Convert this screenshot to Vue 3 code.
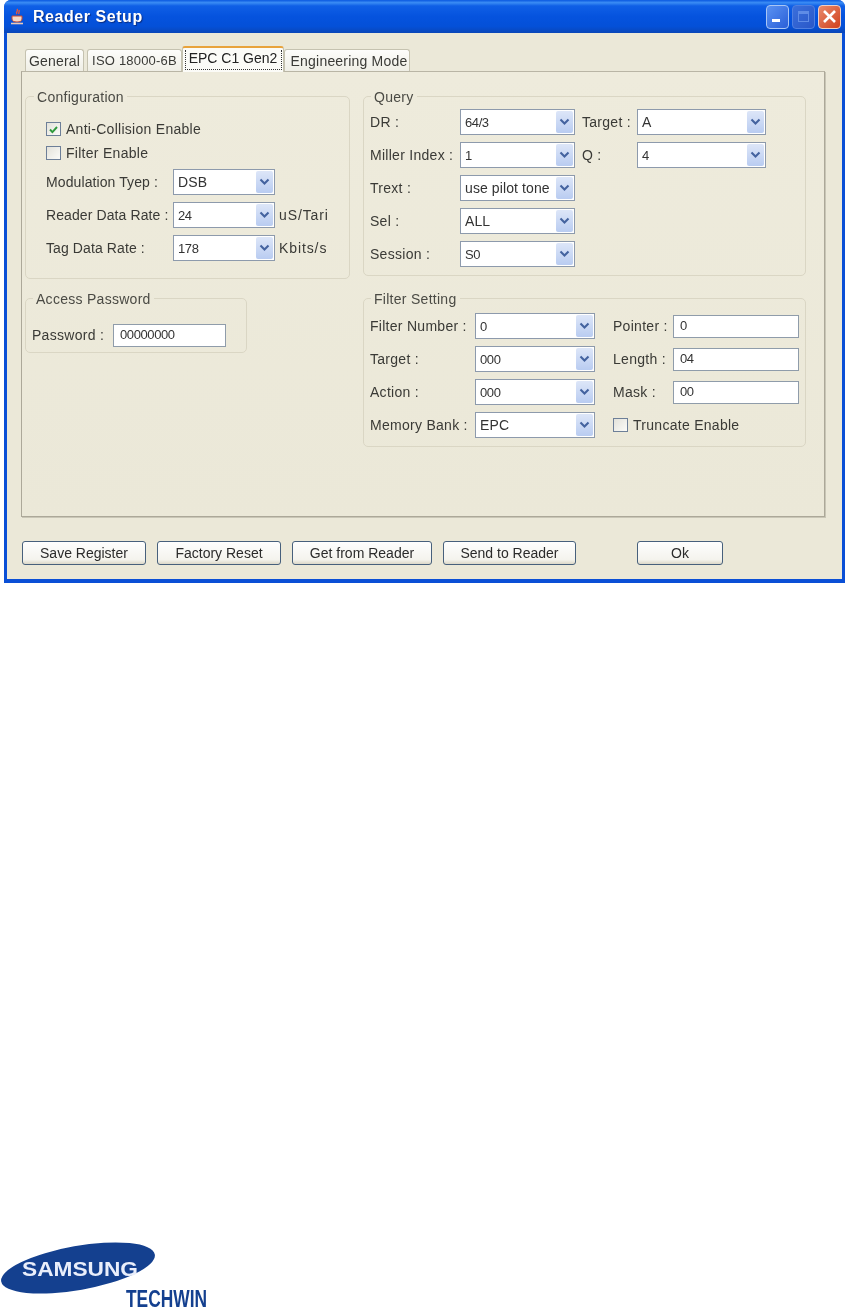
<script setup>
const configRows = [
  { label: 'Modulation Tyep :', value: 'DSB', unit: '' },
  { label: 'Reader Data Rate :', value: '24', unit: 'uS/Tari' },
  { label: 'Tag Data Rate :', value: '178', unit: 'Kbits/s' }
]
const queryRows = [
  { label: 'DR :', value: '64/3', label2: 'Target :', value2: 'A' },
  { label: 'Miller Index :', value: '1', label2: 'Q :', value2: '4' },
  { label: 'Trext :', value: 'use pilot tone' },
  { label: 'Sel :', value: 'ALL' },
  { label: 'Session :', value: 'S0' }
]
const filterRows = [
  { label: 'Filter Number :', value: '0', label2: 'Pointer :', input: '0' },
  { label: 'Target :', value: '000', label2: 'Length :', input: '04' },
  { label: 'Action :', value: '000', label2: 'Mask :', input: '00' }
]
const actions = [
  { text: 'Save Register', cls: 'b1' },
  { text: 'Factory Reset', cls: 'b1' },
  { text: 'Get from Reader', cls: 'b2' },
  { text: 'Send to Reader', cls: 'b3' }
]
const isNum = (v) => /^[\dS/]+$/.test(v)
</script>

<template>
  <div class="page">
    <div class="window">
      <header class="titlebar">
        <svg class="appicon" width="16" height="18" viewBox="0 0 16 18">
          <path d="M8 1c2 2-2 3 0 5M10 2c1 2-1 2 0 4" fill="none" stroke="#e8563a" stroke-width="1.4" />
          <path d="M3 8h10v3c0 2-2 3-5 3s-5-1-5-3z" fill="#f3d9c8" stroke="#c9482e" stroke-width="1" />
          <path d="M2 15.5h12" stroke="#e9c8b8" stroke-width="1.6" />
        </svg>
        <span class="title">Reader Setup</span>
        <div class="winbtns">
          <span class="wb min"><i></i></span>
          <span class="wb max"><i></i></span>
          <span class="wb close">
            <svg width="15" height="15" viewBox="0 0 15 15"><path d="M2 2l11 11M13 2L2 13" stroke="#fff" stroke-width="2.6" /></svg>
          </span>
        </div>
      </header>

      <div class="client">
        <div class="tabs">
          <div class="tab t1">General</div>
          <div class="tab t2">ISO 18000-6B</div>
          <div class="tab active"><span>EPC C1 Gen2</span></div>
          <div class="tab t4">Engineering Mode</div>
        </div>

        <div class="panel">
          <div class="col left">
            <fieldset class="group config">
              <legend>Configuration</legend>
              <div class="check-row">
                <span class="cb">
                  <svg width="11" height="11" viewBox="0 0 11 11"><path d="M2 5.5l2.4 2.6L9 3" fill="none" stroke="#2f9a3c" stroke-width="1.9" /></svg>
                </span>
                <span>Anti-Collision Enable</span>
              </div>
              <div class="check-row">
                <span class="cb"></span>
                <span>Filter Enable</span>
              </div>
              <div class="rows config-rows">
                <div v-for="r in configRows" :key="r.label" class="row">
                  <span class="lbl w127 tight">{{ r.label }}</span>
                  <div class="combo w102">
                    <span class="val" :class="{ num: isNum(r.value) }">{{ r.value }}</span>
                    <span class="arrow"><svg width="11" height="8" viewBox="0 0 11 8"><path d="M1.5 1.5l4 4 4-4" fill="none" stroke="#44639f" stroke-width="2.1" /></svg></span>
                  </div>
                  <span class="unit">{{ r.unit }}</span>
                </div>
              </div>
            </fieldset>

            <fieldset class="group access">
              <legend>Access Password</legend>
              <div class="row">
                <span class="lbl w80">Password :</span>
                <div class="field w113">00000000</div>
              </div>
            </fieldset>
          </div>

          <div class="col right">
            <fieldset class="group query">
              <legend>Query</legend>
              <div class="rows">
                <div v-for="r in queryRows" :key="r.label" class="row">
                  <span class="lbl w90">{{ r.label }}</span>
                  <div class="combo w115">
                    <span class="val" :class="{ num: isNum(r.value) }">{{ r.value }}</span>
                    <span class="arrow"><svg width="11" height="8" viewBox="0 0 11 8"><path d="M1.5 1.5l4 4 4-4" fill="none" stroke="#44639f" stroke-width="2.1" /></svg></span>
                  </div>
                  <template v-if="r.label2">
                    <span class="lbl w55 second">{{ r.label2 }}</span>
                    <div class="combo w129">
                      <span class="val" :class="{ num: isNum(r.value2) }">{{ r.value2 }}</span>
                      <span class="arrow"><svg width="11" height="8" viewBox="0 0 11 8"><path d="M1.5 1.5l4 4 4-4" fill="none" stroke="#44639f" stroke-width="2.1" /></svg></span>
                    </div>
                  </template>
                </div>
              </div>
            </fieldset>

            <fieldset class="group filter">
              <legend>Filter Setting</legend>
              <div class="rows">
                <div v-for="r in filterRows" :key="r.label" class="row">
                  <span class="lbl w105">{{ r.label }}</span>
                  <div class="combo w120">
                    <span class="val" :class="{ num: isNum(r.value) }">{{ r.value }}</span>
                    <span class="arrow"><svg width="11" height="8" viewBox="0 0 11 8"><path d="M1.5 1.5l4 4 4-4" fill="none" stroke="#44639f" stroke-width="2.1" /></svg></span>
                  </div>
                  <span class="lbl w60 third">{{ r.label2 }}</span>
                  <div class="field w126">{{ r.input }}</div>
                </div>
                <div class="row">
                  <span class="lbl w105">Memory Bank :</span>
                  <div class="combo w120">
                    <span class="val">EPC</span>
                    <span class="arrow"><svg width="11" height="8" viewBox="0 0 11 8"><path d="M1.5 1.5l4 4 4-4" fill="none" stroke="#44639f" stroke-width="2.1" /></svg></span>
                  </div>
                  <span class="cb third"></span>
                  <span class="trunc">Truncate Enable</span>
                </div>
              </div>
            </fieldset>
          </div>
        </div>

        <div class="actions">
          <button v-for="a in actions" :key="a.text" class="btn" :class="a.cls">{{ a.text }}</button>
          <button class="btn ok">Ok</button>
        </div>
      </div>
    </div>

    <svg class="logo" width="250" height="77" viewBox="0 0 250 77">
      <ellipse cx="78" cy="30" rx="78" ry="22" transform="rotate(-10 78 30)" fill="#14408f" />
      <text x="22" y="38" class="sam" textLength="116" lengthAdjust="spacingAndGlyphs">SAMSUNG</text>
      <text x="126" y="69" class="tech" textLength="81" lengthAdjust="spacingAndGlyphs">TECHWIN</text>
    </svg>
  </div>
</template>

<style scoped>
.page {
  width: 847px;
  height: 1315px;
  overflow: hidden;
  background: #fff;
  font-family: "Liberation Sans", Arial, sans-serif;
  font-size: 14px;
  letter-spacing: 0.28px;
  color: #3a3a36;
}
.window {
  margin: 0 2px 0 4px;
  width: 841px;
  height: 583px;
  box-sizing: border-box;
  border-radius: 7px 7px 0 0;
  background: #0a4fd6;
  padding: 0 3px 4px 3px;
  display: flex;
  flex-direction: column;
  filter: blur(0.35px);
}
.titlebar {
  margin: 0 -3px;
  height: 33px;
  flex: none;
  box-sizing: border-box;
  padding: 0 4px 0 5px;
  display: flex;
  align-items: center;
  border-radius: 7px 7px 0 0;
  background: linear-gradient(180deg, #0a58e0 0%, #3a8cf4 8%, #0f5fe6 18%, #0553de 50%, #0450d8 80%, #0a46b8 100%);
}
.appicon { margin-right: 8px; flex: none; }
.title {
  color: #fff;
  font-size: 16px;
  font-weight: 700;
  letter-spacing: 0.55px;
  text-shadow: 1px 1px 1px #0a2c80;
}
.winbtns { margin-left: auto; display: flex; gap: 3px; }
.wb {
  width: 23px;
  height: 24px;
  box-sizing: border-box;
  border: 1px solid #dce6fa;
  border-radius: 4px;
  display: flex;
  align-items: center;
  justify-content: center;
}
.min { background: linear-gradient(135deg, #5a92f2, #2a5fd8); border-color: #a9c6f5; align-items: flex-end; justify-content: flex-start; padding: 0 0 6px 5px; }
.min i { display: block; width: 8px; height: 3px; background: #fff; }
.max { background: linear-gradient(135deg, #3a6fdc, #2a58c8); border-color: #4f7fe0; }
.max i { display: block; width: 11px; height: 11px; border: 1px solid #5f8ce6; border-top-width: 3px; box-sizing: border-box; }
.close { background: linear-gradient(135deg, #e98a6c, #d0401c); border-color: #f0d0c4; }
.client {
  flex: 1;
  background: #ebe8d8;
  padding: 13px 17px 15px 14px;
  display: flex;
  flex-direction: column;
}
.tabs { display: flex; height: 25px; padding-left: 4px; flex: none; align-items: flex-end; }
.tab {
  height: 22px;
  box-sizing: border-box;
  border: 1px solid #c5c2b0;
  border-bottom: 0;
  border-radius: 3px 3px 0 0;
  background: linear-gradient(180deg, #fdfdfb, #efeee5);
  display: flex;
  align-items: center;
  justify-content: center;
  white-space: nowrap;
  letter-spacing: 0.2px;
}
.t1 { width: 59px; margin-right: 3px; }
.t2 { width: 95px; font-size: 13px; }
.t4 { width: 126px; padding-left: 4px; }
.tab.active {
  width: 102px;
  height: 26px;
  margin-bottom: -1px;
  position: relative;
  z-index: 1;
  background: #fbfbf7;
  border-top: 2px solid #e8a33c;
  color: #222;
  align-items: flex-start;
  letter-spacing: 0;
}
.tab.active span {
  display: block;
  width: 97px;
  height: 20px;
  margin-top: 2px;
  line-height: 17px;
  text-align: center;
  border: 1px dotted #333;
  border-top: 0;
  box-sizing: border-box;
}
.panel {
  width: 804px;
  height: 446px;
  box-sizing: border-box;
  flex: none;
  border: 1px solid #aca899;
  border-top-color: #b9b5a5;
  background: linear-gradient(180deg, #eeebdc 0%, #ebe8d8 100%);
  box-shadow: 1px 1px 0 #c9c6b6;
  padding: 17px 0 0 3px;
  display: flex;
  gap: 13px;
}
.col { display: flex; flex-direction: column; }
.left { width: 325px; gap: 12px; align-items: flex-start; }
.right { width: 443px; gap: 15px; }
.group {
  margin: 0;
  box-sizing: border-box;
  min-width: 0;
  border: 1px solid #dad6c4;
  border-radius: 5px;
}
.group legend {
  padding: 0 3px;
  line-height: 16px;
  height: 14px;
  color: #4a4a44;
}
.config legend { margin-left: -12px; }
.access legend { margin-left: 1px; }
.query legend, .filter legend { margin-left: 1px; }
.config { width: 325px; height: 190px; padding: 14px 0 0 20px; }
.access { width: 222px; height: 62px; padding: 17px 0 0 6px; }
.query { width: 443px; height: 187px; padding: 6px 0 0 6px; }
.filter { width: 443px; height: 156px; padding: 8px 0 0 6px; }
.check-row { height: 24px; display: flex; align-items: center; gap: 5px; }
.cb {
  width: 15px;
  height: 14px;
  flex: none;
  box-sizing: border-box;
  border: 1px solid #6d7f98;
  background: linear-gradient(135deg, #e3e2da, #fbfbf8);
  display: inline-flex;
  align-items: center;
  justify-content: center;
}
.rows { display: flex; flex-direction: column; gap: 7px; }
.config-rows { margin-top: 4px; }
.row { height: 26px; display: flex; align-items: center; }
.lbl { flex: none; white-space: nowrap; }
.tight { letter-spacing: 0.1px; }
.w127 { width: 127px; }
.w80 { width: 81px; }
.w90 { width: 90px; }
.w105 { width: 105px; }
.w55 { width: 55px; }
.w60 { width: 60px; }
.second { margin-left: 7px; }
.third { margin-left: 18px; }
.combo {
  height: 26px;
  flex: none;
  box-sizing: border-box;
  border: 1px solid #8d9aac;
  background: #fff;
  display: flex;
  align-items: center;
  padding: 1px;
  color: #333;
}
.w102 { width: 102px; }
.w115 { width: 115px; }
.w129 { width: 129px; }
.w120 { width: 120px; }
.val { flex: 1; padding-left: 3px; white-space: nowrap; overflow: hidden; letter-spacing: 0.1px; }
.num { font-size: 13px; letter-spacing: -0.4px; }
.arrow {
  width: 17px;
  height: 100%;
  flex: none;
  border-radius: 2px;
  background: linear-gradient(180deg, #dde6f8, #b9ccf1);
  display: flex;
  align-items: center;
  justify-content: center;
}
.unit { margin-left: 4px; white-space: nowrap; letter-spacing: 0.9px; }
.field {
  height: 23px;
  box-sizing: border-box;
  border: 1px solid #8f9caa;
  background: #fff;
  padding-left: 6px;
  line-height: 20px;
  flex: none;
  color: #333;
  font-size: 13px;
  letter-spacing: -0.4px;
}
.w113 { width: 113px; }
.w126 { width: 126px; }
.trunc { margin-left: 5px; white-space: nowrap; }
.actions { display: flex; margin-top: 24px; height: 23px; padding-left: 1px; flex: none; }
.btn {
  height: 24px;
  box-sizing: border-box;
  border: 1px solid #47607c;
  border-radius: 3px;
  background: linear-gradient(180deg, #fefefe 0%, #f4f3ed 80%, #dcd8c8 100%);
  font-family: inherit;
  font-size: 14px;
  letter-spacing: 0;
  color: #2b2b2b;
  padding: 0;
}
.b1 { width: 124px; margin-right: 11px; }
.b2 { width: 140px; margin-right: 11px; }
.b3 { width: 133px; }
.ok { width: 86px; margin-left: 61px; }
.logo { display: block; margin-top: 655px; filter: blur(0.5px); }
.sam {
  font-family: "Liberation Sans", Arial, sans-serif;
  font-size: 21px;
  font-weight: 700;
  letter-spacing: 0;
  fill: #e9eefb;
}
.tech {
  font-family: "Liberation Sans", Arial, sans-serif;
  font-size: 23px;
  font-weight: 700;
  letter-spacing: 0;
  fill: #14408f;
}
</style>
